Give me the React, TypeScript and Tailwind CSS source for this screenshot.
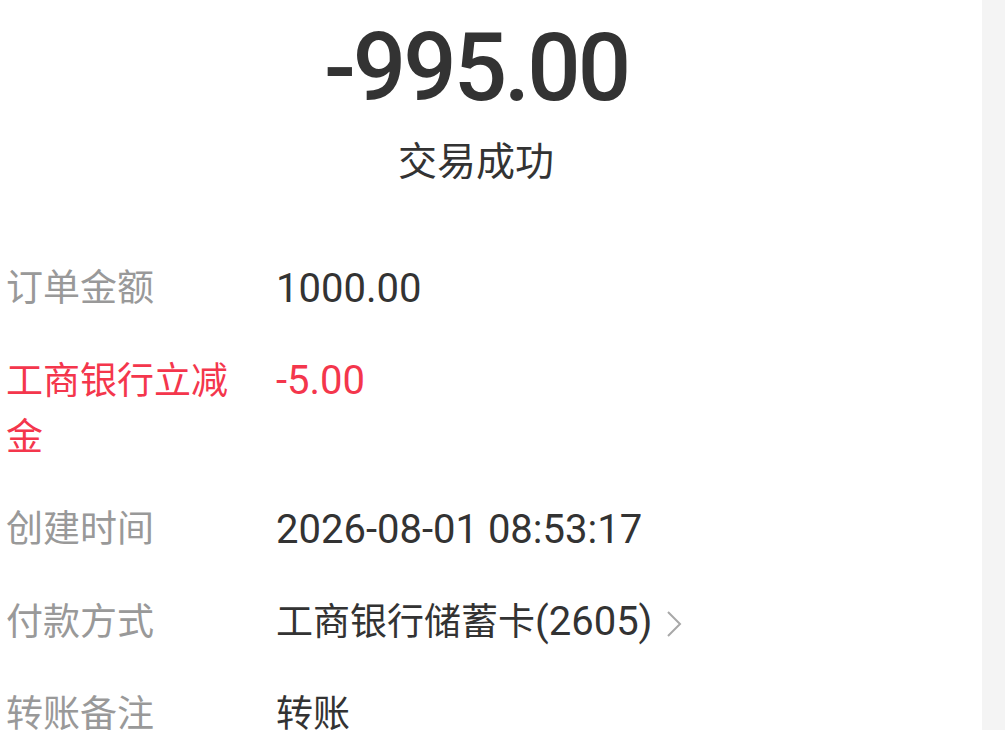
import React from "react";

const cjk = "font-['Roboto','Noto_Sans_CJK_SC',sans-serif]";

function Num({ children }: { children: React.ReactNode }) {
  return <span className="text-[40px]">{children}</span>;
}

function Row({
  label,
  value,
  red,
  chevron,
}: {
  label: string;
  value: React.ReactNode;
  red?: boolean;
  chevron?: boolean;
}) {
  return (
    <div className="flex items-start">
      <div
        className={`w-[240px] shrink-0 text-[37px] leading-[56px] ${
          red ? "text-[#f4364c]" : "text-[#999999]"
        }`}
      >
        {label}
      </div>
      <div
        className={`ml-[30px] flex h-[56px] items-center text-[37px] leading-[56px] ${
          red ? "text-[#f4364c]" : "text-[#333333]"
        }`}
      >
        <span>{value}</span>
        {chevron && (
          <svg
            width="18"
            height="30"
            viewBox="0 0 18 30"
            className="ml-[12px] mt-[2px]"
            fill="none"
            stroke="#a8a8a8"
            strokeWidth="2"
          >
            <polyline points="3,3 15,15 3,27" />
          </svg>
        )}
      </div>
    </div>
  );
}

export default function App() {
  return (
    <div className={`flex h-[730px] w-[1005px] overflow-hidden bg-white ${cjk}`}>
      <div className="w-[982px] shrink-0">
        <div className="w-[952px] pt-[21px] text-center">
          <div className="font-['Roboto',sans-serif] text-[94px] font-medium leading-[94px] tracking-[-3px] text-[#333333]">
            -995.00
          </div>
          <div className="mt-[19px] text-[39px] leading-[56px] text-[#333333]">
            交易成功
          </div>
        </div>
        <div className="mt-[71px] flex flex-col gap-[36.5px] pl-[6px]">
          <Row label="订单金额" value={<Num>1000.00</Num>} />
          <Row label="工商银行立减金" value={<Num>-5.00</Num>} red />
          <Row label="创建时间" value={<Num>2026-08-01 08:53:17</Num>} />
          <Row
            label="付款方式"
            value={
              <>
                工商银行储蓄卡<Num>(2605)</Num>
              </>
            }
            chevron
          />
          <Row label="转账备注" value="转账" />
        </div>
      </div>
      <div className="flex-1 bg-[#f4f4f4]" />
    </div>
  );
}
